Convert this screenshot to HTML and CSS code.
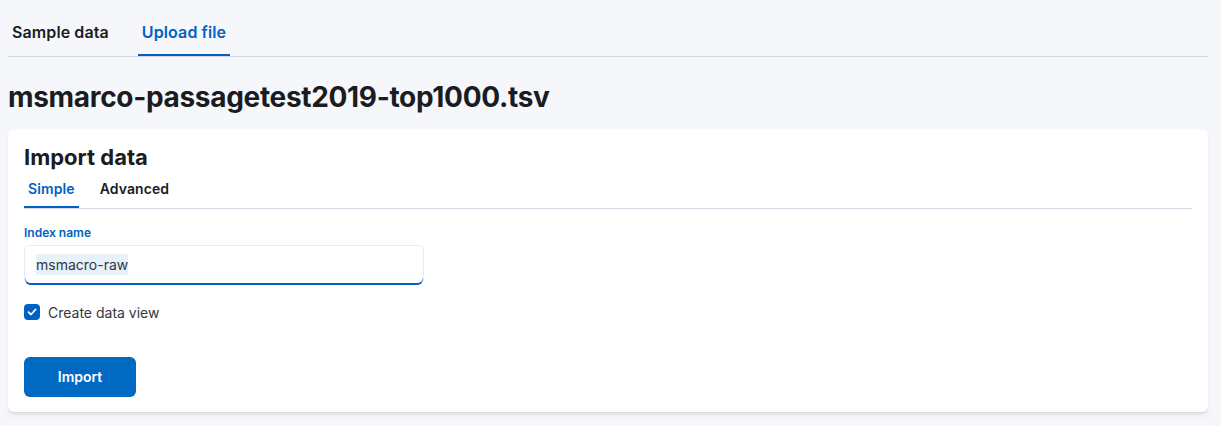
FILE: index.html
```html
<!DOCTYPE html>
<html>
<head>
<meta charset="utf-8">
<link rel="stylesheet" href="styles.css">
</head>
<body>
<div class="page">
  <div class="top-tabs">
    <div class="top-tab">Sample data</div>
    <div class="top-tab active">Upload file</div>
  </div>
  <h1 class="file-title">msmarco-passagetest2019-top1000.tsv</h1>
  <div class="panel">
    <h2 class="panel-title">Import data</h2>
    <div class="sub-tabs">
      <div class="sub-tab active">Simple</div>
      <div class="sub-tab">Advanced</div>
    </div>
    <div class="form">
      <label class="field-label">Index name</label>
      <div class="input"><span class="selected">msmacro-raw</span></div>
      <div class="check-row">
        <span class="checkbox">
          <svg width="16" height="16" viewBox="0 0 16 16"><path d="M4.5 8.2 L7 10.5 L11.5 5.5" fill="none" stroke="#fff" stroke-width="1.8" stroke-linecap="round" stroke-linejoin="round"/></svg>
        </span>
        <span class="check-label">Create data view</span>
      </div>
      <button class="btn">Import</button>
    </div>
  </div>
</div>
</body>
</html>
```
FILE: styles.css
```css
* { box-sizing: border-box; }
html, body { margin: 0; padding: 0; }
body {
  background: #f6f7fb;
  font-family: Inter, "Noto Sans", sans-serif;
  color: #1a1c21;
  width: 1221px;
  height: 426px;
  overflow: hidden;
}
.page { padding: 8px 13px 0 8px; }
.top-tabs {
  display: flex;
  gap: 25px;
  border-bottom: 1px solid #d3dae6;
  height: 49px;
}
.top-tab {
  font-size: 16px;
  font-weight: 600;
  padding: 0 4px;
  line-height: 48px;
  height: 48px;
  color: #1a1c21;
  letter-spacing: 0.1px;
}
.top-tab.active {
  color: #0061c2;
  border-bottom: 2px solid #0061c2;
  line-height: 48px;
}
.file-title {
  margin: 24px 0 16px;
  font-size: 28px;
  line-height: 32px;
  font-weight: 700;
  letter-spacing: -0.32px;
}
.panel {
  background: #fff;
  border-radius: 6px;
  width: 1200px;
  height: 283px;
  padding: 16px;
  box-shadow: 0 0.8px 0.8px rgba(0,0,0,0.05), 0 2.3px 2px rgba(0,0,0,0.04), 0 4px 6px rgba(0,0,0,0.04);
}
.panel-title {
  margin: 0;
  font-size: 22px;
  line-height: 24px;
  font-weight: 700;
}
.sub-tabs {
  display: flex;
  gap: 17px;
  border-bottom: 1px solid #d3dae6;
  margin-top: 4px;
  height: 36px;
}
.sub-tab {
  font-size: 14px;
  font-weight: 600;
  padding: 0 4px;
  height: 35px;
  line-height: 32px;
  letter-spacing: 0.1px;
}
.sub-tab.active {
  color: #0061c2;
  border-bottom: 2px solid #0061c2;
}
.form { padding-top: 16px; display: flex; flex-direction: column; align-items: flex-start; }
.field-label {
  font-size: 12px;
  font-weight: 600;
  color: #0061c2;
  line-height: 16px;
  margin-bottom: 4px;
}
.input {
  width: 400px;
  height: 40px;
  border: 1px solid #e9edf3;
  border-bottom: none;
  border-radius: 6px;
  box-shadow: inset 0 -2px 0 #0061c2;
  padding: 0 11px;
  font-size: 14px;
  line-height: 38px;
  color: #343741;
  background: #fff;
}
.selected { background: #e6f1fa; padding: 2px 0; }
.check-row {
  display: flex;
  align-items: center;
  gap: 8px;
  margin-top: 19px;
  height: 16px;
}
.checkbox {
  width: 16px;
  height: 16px;
  border-radius: 4px;
  background: #0061c2;
  display: flex;
}
.check-label { font-size: 14px; color: #343741; line-height: 20px; position: relative; top: 1px; }
.btn {
  margin-top: 37px;
  width: 112px;
  height: 40px;
  border: none;
  border-radius: 6px;
  background: #0069c2;
  color: #fff;
  font-family: Inter, "Noto Sans", sans-serif;
  font-size: 14px;
  font-weight: 600;
  line-height: 38px;
  cursor: pointer;
}
```
